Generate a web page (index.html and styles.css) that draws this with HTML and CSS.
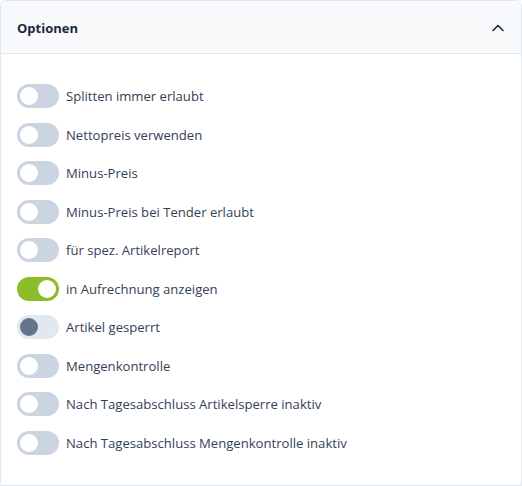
FILE: index.html
```html
<!DOCTYPE html>
<html>
   <head>
      <meta name="viewport" content="width=device-width, initial-scale=1">
      <link rel="stylesheet" href="styles.css">
   </head>
   <body>
      <div class="panel">
         <div class="panel-head">
            <span class="panel-title">Optionen</span>
            <svg class="chevron" width="14" height="14" viewBox="0 0 14 14">
               <path d="M2 9.5 L7 4.5 L12 9.5" fill="none" stroke="#1e293b" stroke-width="1.6" stroke-linecap="round" stroke-linejoin="round"/>
            </svg>
         </div>
         <div class="panel-body">
            <label class="option"><span class="switch"></span>Splitten immer erlaubt</label>
            <label class="option"><span class="switch"></span>Nettopreis verwenden</label>
            <label class="option"><span class="switch"></span>Minus-Preis</label>
            <label class="option"><span class="switch"></span>Minus-Preis bei Tender erlaubt</label>
            <label class="option"><span class="switch"></span>für spez. Artikelreport</label>
            <label class="option"><span class="switch on"></span>in Aufrechnung anzeigen</label>
            <label class="option"><span class="switch locked"></span>Artikel gesperrt</label>
            <label class="option"><span class="switch"></span>Mengenkontrolle</label>
            <label class="option"><span class="switch"></span>Nach Tagesabschluss Artikelsperre inaktiv</label>
            <label class="option"><span class="switch"></span>Nach Tagesabschluss Mengenkontrolle inaktiv</label>
         </div>
      </div>
   </body>
</html>
```

FILE: styles.css
```css
body {
margin: 0;
font-family: "Open Sans", "Noto Sans", sans-serif;
background: #fff;
}
.panel {
width: 520px;
height: 484px;
border: 1px solid #e2e8f0;
border-radius: 6px 6px 0 0;
overflow: hidden;
}
.panel-head {
height: 50px;
padding: 2px 16px 0 16px;
background-color: #f8fafc;
border-bottom: 1px solid #e2e8f0;
display: flex;
align-items: center;
justify-content: space-between;
}
.panel-title {
font-size: 13px;
font-weight: 700;
color: #1e293b;
}
.chevron {
margin-top: -1px;
}
.panel-body {
padding: 30px 16px 0 16px;
display: flex;
flex-direction: column;
gap: 14.5px;
}
.option {
display: flex;
align-items: center;
gap: 7px;
font-size: 13.1px;
color: #334155;
height: 24px;
}
.switch {
position: relative;
width: 42px;
height: 24px;
border-radius: 12px;
background-color: #cbd5e1;
flex-shrink: 0;
}
.switch::after {
content: "";
position: absolute;
top: 3px;
left: 3px;
width: 18px;
height: 18px;
border-radius: 50%;
background-color: #fff;
}
.switch.on {
background-color: #8bbd2a;
}
.switch.on::after {
left: 21px;
}
.switch.locked {
background-color: #e2e8f0;
}
.switch.locked::after {
background-color: #64748b;
}
```
